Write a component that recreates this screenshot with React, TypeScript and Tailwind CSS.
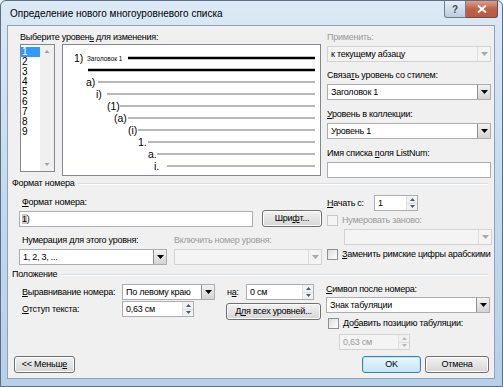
import type { ReactNode } from 'react'

const font = "font-['Liberation_Sans','Noto_Sans',Arial,sans-serif]"
const txt = 'text-[9px] tracking-[-0.25px] whitespace-nowrap'

function Arrow({ disabled }: { disabled?: boolean }) {
  return (
    <svg width="7" height="4" viewBox="0 0 7 4">
      <path d="M0 0 L7 0 L3.5 4 Z" fill={disabled ? '#a8a8a8' : '#000'} />
    </svg>
  )
}

function Combo({ value, width, disabled }: { value?: string; width: string; disabled?: boolean }) {
  return (
    <div
      className={`flex h-[16px] ${width} border ${
        disabled ? 'border-[#d2d2d2] bg-[#f4f4f4]' : 'border-[#abadb3] bg-white'
      }`}
    >
      <div className={`flex-1 truncate pl-[3px] leading-[14px] ${txt}`}>{value}</div>
      <div
        className={`flex w-[13px] items-center justify-center border-l ${
          disabled ? 'border-[#dcdcdc] bg-[#f4f4f4]' : 'border-[#8e8f8f] bg-gradient-to-b from-[#f2f2f2] to-[#d4d4d4]'
        }`}
      >
        <Arrow disabled={disabled} />
      </div>
    </div>
  )
}

function Spin({ value, width, disabled }: { value: string; width: string; disabled?: boolean }) {
  return (
    <div
      className={`flex h-[16px] ${width} border ${
        disabled ? 'border-[#d2d2d2] bg-[#f4f4f4] text-[#9a9a9a]' : 'border-[#abadb3] bg-white'
      }`}
    >
      <div className={`flex-1 pl-[3px] leading-[14px] ${txt}`}>{value}</div>
      <div className="flex w-[11px] flex-col border-l border-[#e0e0e0] bg-[#f2f2f2]">
        <div className="flex flex-1 items-center justify-center border-b border-[#dcdcdc]">
          <svg width="5" height="3" viewBox="0 0 5 3">
            <path d="M0 3 L5 3 L2.5 0 Z" fill={disabled ? '#b8b8b8' : '#4a5a6a'} />
          </svg>
        </div>
        <div className="flex flex-1 items-center justify-center">
          <svg width="5" height="3" viewBox="0 0 5 3">
            <path d="M0 0 L5 0 L2.5 3 Z" fill={disabled ? '#b8b8b8' : '#4a5a6a'} />
          </svg>
        </div>
      </div>
    </div>
  )
}

function Btn({ children, width, primary }: { children: ReactNode; width: string; primary?: boolean }) {
  return (
    <div
      className={`flex h-[17px] ${width} items-center justify-center rounded-[3px] border ${txt} ${
        primary
          ? 'border-[#3c7fb1] bg-gradient-to-b from-[#eaf6fd] to-[#c4e5f6] shadow-[inset_0_0_0_1px_#bde6fd]'
          : 'border-[#707070] bg-gradient-to-b from-[#f2f2f2] to-[#d6d6d6] shadow-[inset_0_0_0_1px_#fcfcfc]'
      }`}
    >
      {children}
    </div>
  )
}

function Check({ children, disabled }: { children: ReactNode; disabled?: boolean }) {
  return (
    <div className={`flex h-[13px] items-center gap-[4px] ${txt} ${disabled ? 'text-[#9a9a9a]' : ''}`}>
      <div
        className={`h-[11px] w-[11px] shrink-0 border ${
          disabled ? 'border-[#c8c8c8] bg-[#f4f4f4]' : 'border-[#8e8f8f] bg-gradient-to-br from-[#dcdcdc] to-white'
        }`}
      />
      <span>{children}</span>
    </div>
  )
}

function Label({ children, disabled, className = '' }: { children: ReactNode; disabled?: boolean; className?: string }) {
  return (
    <div className={`h-[13px] leading-[13px] ${txt} ${disabled ? 'text-[#9a9a9a]' : ''} ${className}`}>
      {children}
    </div>
  )
}

function GroupHeader({ title }: { title: string }) {
  return (
    <div className={`flex h-[14px] items-center pr-[2px] ${txt}`}>
      <span className="pr-[4px]">{title}</span>
      <div className="h-[2px] flex-1 border-t border-b border-t-[#d5dfe5] border-b-white" />
    </div>
  )
}

function Preview() {
  const rows = [
    { label: 'a)', x: 23, y: 37, from: 35 },
    { label: 'i)', x: 33, y: 49, from: 44 },
    { label: '(1)', x: 44, y: 61, from: 57 },
    { label: '(a)', x: 51, y: 73, from: 65 },
    { label: '(i)', x: 65, y: 85, from: 75 },
    { label: '1.', x: 75, y: 97, from: 85 },
    { label: 'a.', x: 85, y: 109, from: 94 },
    { label: 'i.', x: 91, y: 121, from: 104 },
  ]
  return (
    <div className="ml-[7px] h-[132px] w-[259px] border border-[#828790] bg-white">
      <svg width="257" height="130" viewBox="0 0 257 130" className="block">
        <text x="11" y="17" fontSize="10.5" fontFamily="Liberation Sans, Arial, sans-serif">1)</text>
        <text x="24" y="16" fontSize="6.4" fontFamily="Liberation Sans, Arial, sans-serif">Заголовок 1</text>
        <line x1="65" y1="13" x2="252" y2="13" stroke="#000" strokeWidth="2.5" />
        <line x1="25" y1="25" x2="252" y2="25" stroke="#000" strokeWidth="2.5" />
        {rows.map((r) => (
          <g key={r.label + r.y}>
            <text x={r.x} y={r.y + 3.5} fontSize="10.5" fontFamily="Liberation Sans, Arial, sans-serif">
              {r.label}
            </text>
            <line x1={r.from} y1={r.y} x2="252" y2={r.y} stroke="#a0a0a0" strokeWidth="1.6" />
          </g>
        ))}
      </svg>
    </div>
  )
}

function LevelList() {
  return (
    <div className={`flex h-[128px] w-[35px] border border-[#828790] bg-white ${txt}`}>
      <div className="flex-1 pt-[2px]">
        {['1', '2', '3', '4', '5', '6', '7', '8', '9'].map((n) => (
          <div
            key={n}
            className={`h-[10px] pl-[1px] text-[10px] leading-[10px] ${n === '1' ? 'bg-[#3399ff] text-white' : ''}`}
          >
            {n}
          </div>
        ))}
      </div>
      <div className="flex w-[14px] flex-col justify-between bg-[#f0f0f0] py-[4px]">
        <svg width="14" height="4" viewBox="0 0 14 4">
          <path d="M4.5 4 L9.5 4 L7 1 Z" fill="#a0a0a0" />
        </svg>
        <svg width="14" height="4" viewBox="0 0 14 4">
          <path d="M4.5 0 L9.5 0 L7 3 Z" fill="#a0a0a0" />
        </svg>
      </div>
    </div>
  )
}

export default function App() {
  return (
    <div className={`${font} h-[387px] w-[503px] bg-[#f0f0f0] text-black`}>
      <div className="relative h-[387px] w-[503px] rounded-t-[6px] border border-[#5b6f84] bg-gradient-to-b from-[#dce9f6] via-[#c5d9ee] to-[#b7cfe8]">
        {/* title bar */}
        <div className="flex h-[24px] items-center pl-[9px] text-[10px]">
          Определение нового многоуровневого списка
        </div>
        <div className="absolute right-[4px] top-0 flex h-[17px]">
          <div className="flex w-[22px] items-center justify-center rounded-bl-[3px] border border-t-0 border-[#6f7f90] bg-gradient-to-b from-[#e6eef7] to-[#bccbdb] text-[10px] font-bold text-[#3b4b5b]">
            ?
          </div>
          <div className="flex w-[32px] items-center justify-center rounded-br-[3px] border border-l-0 border-t-0 border-[#6f4a40] bg-gradient-to-b from-[#d9a08e] via-[#c0604a] to-[#b85a40]">
            <svg width="10" height="8" viewBox="0 0 10 8">
              <path d="M1 0.5 L9 7.5 M9 0.5 L1 7.5" stroke="#fff" strokeWidth="2" />
            </svg>
          </div>
        </div>

        {/* panel */}
        <div className="mx-[6px] h-[354px] w-[488px] border border-[#8da2b8] bg-[#f0f0f0] px-[4px]">
          {/* top section */}
          <div className="flex h-[151px] pt-[5px] pl-[8px]">
            <div className="w-[302px]">
              <Label>
                Выберите уровен<u>ь</u> для изменения:
              </Label>
              <div className="flex">
                <LevelList />
                <Preview />
              </div>
            </div>
            <div className="ml-[6px] w-[164px]">
              <Label disabled>Применить:</Label>
              <div className="mt-[2px]">
                <Combo value="к текущему абзацу" width="w-[164px]" disabled />
              </div>
              <Label className="mt-[7px]">
                Связа<u>т</u>ь уровень со стилем:
              </Label>
              <div className="mt-[2px]">
                <Combo value="Заголовок 1" width="w-[164px]" />
              </div>
              <Label className="mt-[8px]">
                <u>У</u>ровень в коллекции:
              </Label>
              <div className="mt-[2px]">
                <Combo value="Уровень 1" width="w-[164px]" />
              </div>
              <Label className="mt-[8px]">
                Имя списка <u>п</u>оля ListNum:
              </Label>
              <div className="mt-[2px] h-[16px] w-[164px] border border-[#abadb3] bg-white" />
            </div>
          </div>

          <GroupHeader title="Формат номера" />

          <div className="flex h-[77px] pl-[7px]">
            <div className="w-[303px]">
              <Label className="mt-[5px] pl-[3px]">
                <u>Ф</u>ормат номера:
              </Label>
              <div className="mt-[1px] flex items-center">
                <div className={`h-[16px] w-[234px] border border-[#abadb3] bg-white pl-[2px] leading-[14px] ${txt}`}>
                  <span className="bg-[#c8c8c8]">1</span>)
                </div>
                <div className="ml-[9px]">
                  <Btn width="w-[60px]">
                    Шри<u>ф</u>т...
                  </Btn>
                </div>
              </div>
              <div className="mt-[7px] flex">
                <div className="w-[155px]">
                  <Label className="pl-[3px]">Нумерация для этого уровня:</Label>
                  <div className="mt-[2px]">
                    <Combo value="1, 2, 3, ..." width="w-[148px]" />
                  </div>
                </div>
                <div>
                  <Label disabled>Включить номер уровня:</Label>
                  <div className="mt-[2px]">
                    <Combo width="w-[148px]" disabled />
                  </div>
                </div>
              </div>
            </div>
            <div className="ml-[5px] w-[165px]">
              <div className="mt-[4px] flex items-center">
                <Label className="w-[47px]">
                  <u>Н</u>ачать с:
                </Label>
                <Spin value="1" width="w-[44px]" />
              </div>
              <div className="mt-[3px]">
                <Check disabled>Нумеровать заново:</Check>
              </div>
              <div className="mt-[2px] pl-[17px]">
                <Combo width="w-[148px]" disabled />
              </div>
              <div className="mt-[3px]">
                <Check>
                  <u>З</u>аменить римские цифры арабскими
                </Check>
              </div>
            </div>
          </div>

          <GroupHeader title="Положение" />

          <div className="flex h-[74px] pl-[7px]">
            <div className="w-[303px] pl-[3px]">
              <div className="mt-[2px] flex items-center">
                <Label className="w-[100px]">
                  <u>В</u>ыравнивание номера:
                </Label>
                <Combo value="По левому краю" width="w-[93px]" />
                <Label className="ml-[12px] w-[19px]">
                  н<u>а</u>:
                </Label>
                <Spin value="0 см" width="w-[68px]" />
              </div>
              <div className="mt-[1px] flex items-start">
                <Label className="mt-[2px] w-[100px]">
                  <u>О</u>тступ текста:
                </Label>
                <Spin value="0,63 см" width="w-[72px]" />
                <div className="ml-[32px] mt-[2px]">
                  <Btn width="w-[95px]">
                    Д<u>л</u>я всех уровней...
                  </Btn>
                </div>
              </div>
            </div>
            <div className="ml-[5px] w-[165px]">
              <Label className="mt-[1px]">
                <u>С</u>имвол после номера:
              </Label>
              <div className="mt-[1px]">
                <Combo value="Знак табуляции" width="w-[164px]" />
              </div>
              <div className="mt-[4px] pl-[2px]">
                <Check>
                  До<u>б</u>авить позицию табуляции:
                </Check>
              </div>
              <div className="mt-[4px] pl-[13px]">
                <Spin value="0,63 см" width="w-[71px]" disabled />
              </div>
            </div>
          </div>

          <div className="flex items-center pl-[2px] pr-[1px]">
            <Btn width="w-[61px]">
              &lt;&lt; Меньш<u>е</u>
            </Btn>
            <div className="flex-1" />
            <Btn width="w-[59px]" primary>
              OK
            </Btn>
            <div className="ml-[4px]">
              <Btn width="w-[64px]">Отмена</Btn>
            </div>
          </div>
        </div>
      </div>
    </div>
  )
}
